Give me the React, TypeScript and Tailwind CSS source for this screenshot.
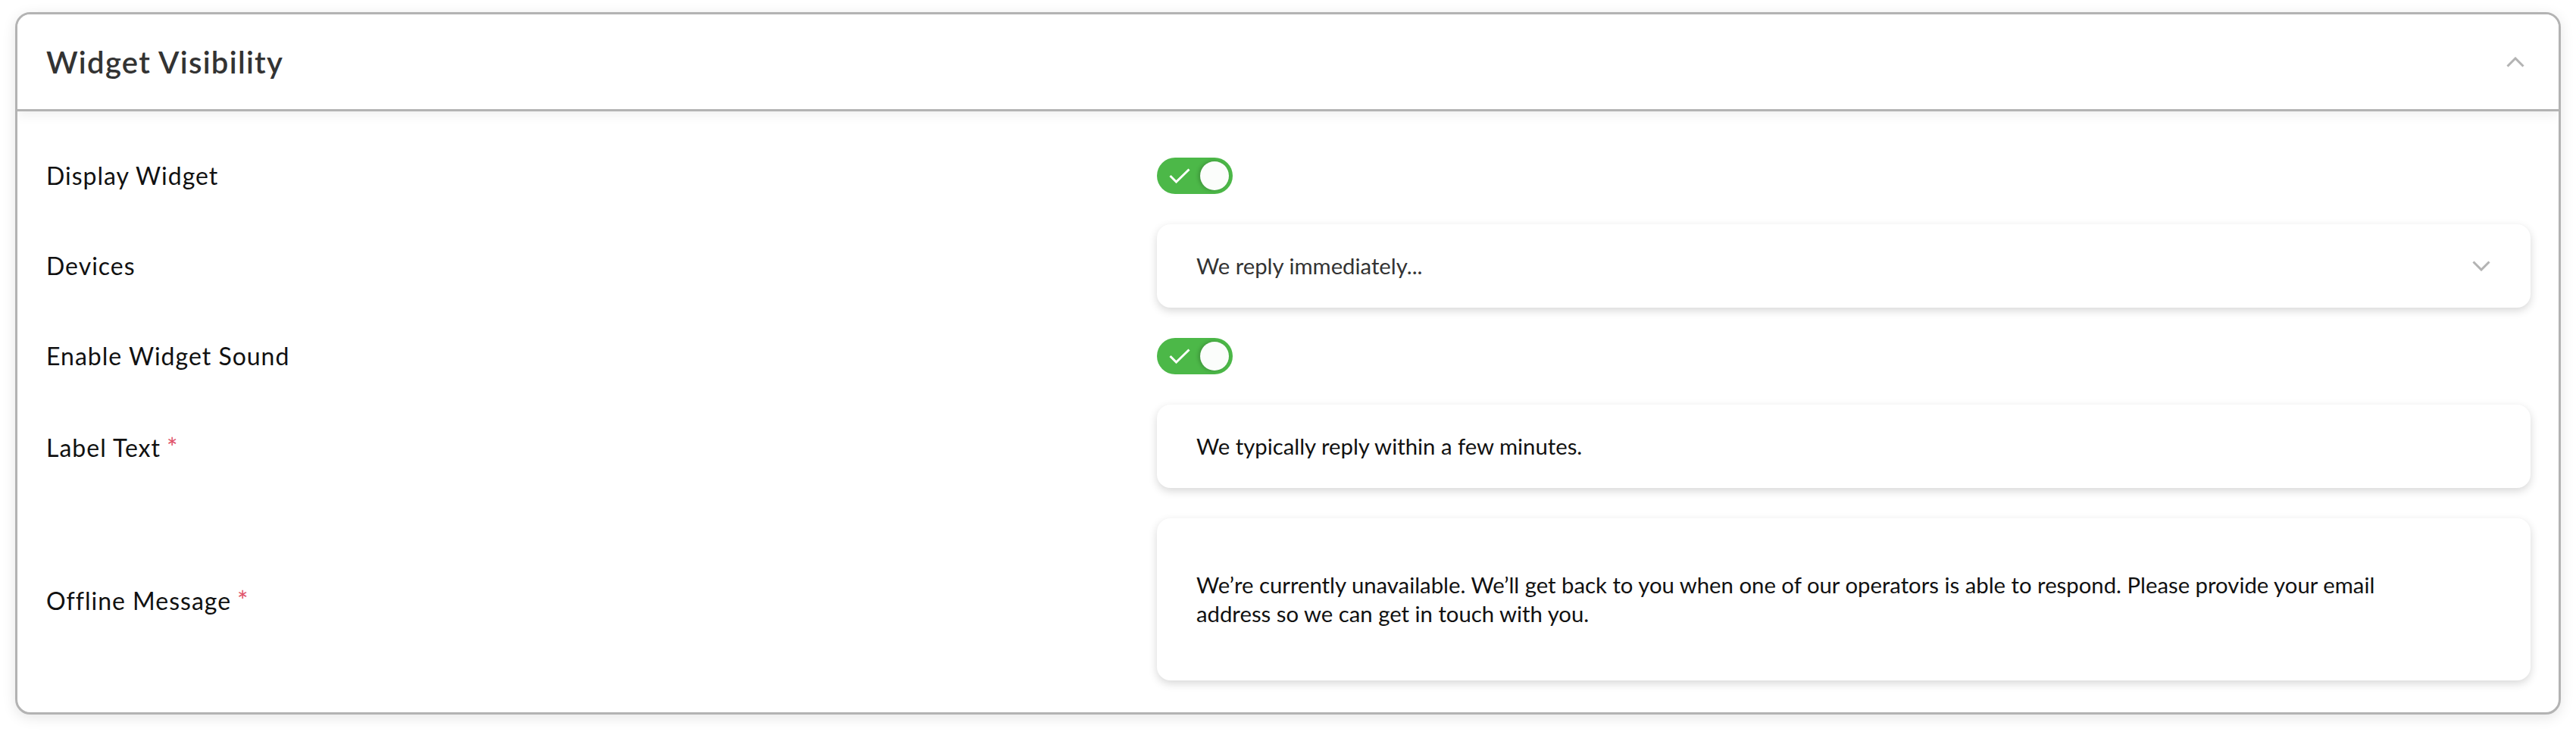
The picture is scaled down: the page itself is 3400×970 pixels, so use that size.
const Check = () => (
    <svg width="28" height="20" viewBox="0 0 28 20" fill="none">
        <path d="M1.5 10l8 8L26.5 1.5" stroke="white" strokeWidth="3" />
    </svg>
);

const Chevron = ({ up = false }: { up?: boolean }) => (
    <svg width="24" height="14" viewBox="0 0 24 14" fill="none">
        <path
            d={up ? "M1.5 12.5L12 2l10.5 10.5" : "M1.5 1.5L12 12l10.5-10.5"}
            stroke="#b3b3b3"
            strokeWidth="3"
        />
    </svg>
);

const Toggle = () => (
    <div className="w-[100px] h-[48px] rounded-full bg-[#4cb848] flex items-center justify-between pl-[16px] pr-[5px]">
        <Check />
        <div className="w-[38px] h-[38px] rounded-full bg-[#fbfdfb] shadow-[-2px_0_5px_rgba(0,0,0,0.22)]" />
    </div>
);

const Label = ({ text, required }: { text: string; required?: boolean }) => (
    <div className="w-[1466px] shrink-0 text-[32px] tracking-[1px] text-[#111]">
        {text}
        {required && <span className="ml-[8px] text-[34px] text-[#e0526a]">*</span>}
    </div>
);

const Row = ({ children }: { children: React.ReactNode }) => (
    <div className="flex items-center">{children}</div>
);

const Box = ({ children, className }: { children: React.ReactNode; className: string }) => (
    <div
        className={`flex-1 flex items-center justify-between rounded-[18px] bg-white pl-[52px] pr-[53px] shadow-[0_4px_12px_rgba(0,0,0,0.16)] ${className}`}
    >
        {children}
    </div>
);

export default function App() {
    return (
        <div className="min-h-screen bg-white px-[20px] pt-[16px] font-['Lato',sans-serif]">
            <div className="rounded-[20px] border-[3px] border-[#b3b3b3] bg-white shadow-[0_4px_18px_rgba(0,0,0,0.1)] overflow-hidden">
                <div className="relative z-10 h-[128px] flex items-center justify-between pl-[38px] pr-[45px] border-b-[3px] border-[#b3b3b3] bg-white shadow-[0_6px_14px_rgba(0,0,0,0.06)]">
                    <h2 className="text-[40px] tracking-[1.3px] font-semibold text-[#333]">
                        Widget Visibility
                    </h2>
                    <Chevron up />
                </div>

                <div className="flex flex-col gap-[40px] pt-[61px] pb-[42px] pl-[38px] pr-[37px]">
                    <Row>
                        <Label text="Display Widget" />
                        <Toggle />
                    </Row>
                    <Row>
                        <Label text="Devices" />
                        <Box className="h-[110px]">
                            <span className="text-[29.3px] text-[#333]">We reply immediately...</span>
                            <Chevron />
                        </Box>
                    </Row>
                    <Row>
                        <Label text="Enable Widget Sound" />
                        <Toggle />
                    </Row>
                    <Row>
                        <Label text="Label Text" required />
                        <Box className="h-[110px]">
                            <span className="text-[29.3px] text-[#111]">
                                We typically reply within a few minutes.
                            </span>
                        </Box>
                    </Row>
                    <Row>
                        <Label text="Offline Message" required />
                        <Box className="h-[214px]">
                            <p className="text-[29.3px] leading-[38px] text-[#111]">
                                We’re currently unavailable. We’ll get back to you when one of our
                                operators is able to respond. Please provide your email
                                <br />
                                address so we can get in touch with you.
                            </p>
                        </Box>
                    </Row>
                </div>
            </div>
        </div>
    );
}
